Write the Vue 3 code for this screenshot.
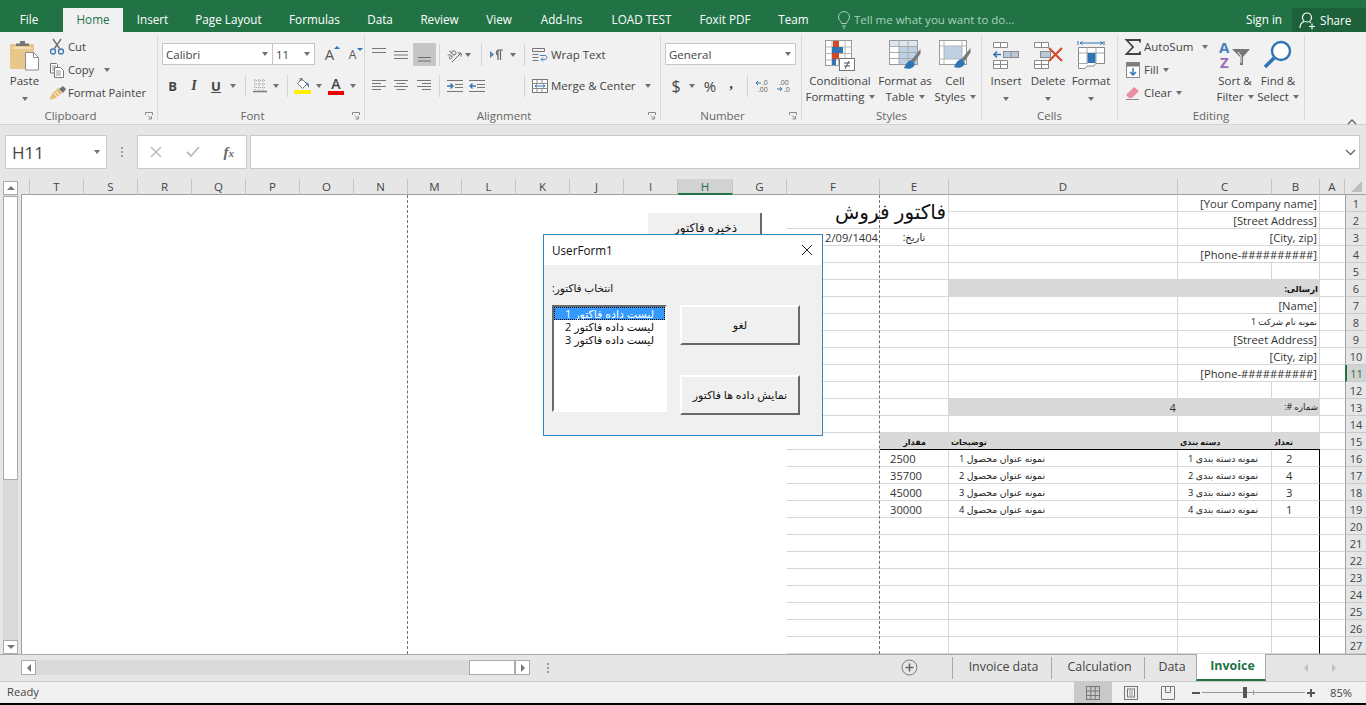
<script setup>
const tabs = [
  { t: 'File', w: 58 }, { t: 'Home', w: 60, on: true }, { t: 'Insert', w: 59 }, { t: 'Page Layout', w: 93 },
  { t: 'Formulas', w: 79 }, { t: 'Data', w: 52 }, { t: 'Review', w: 67 }, { t: 'View', w: 52 },
  { t: 'Add-Ins', w: 73 }, { t: 'LOAD TEST', w: 87 }, { t: 'Foxit PDF', w: 80 }, { t: 'Team', w: 57 }
]
const cols = ['', 'T', 'S', 'R', 'Q', 'P', 'O', 'N', 'M', 'L', 'K', 'J', 'I', 'H', 'G', 'F', 'E', 'D', 'C', 'B', 'A']
const mergedCB = [1, 2, 3, 4, 6, 7, 8, 9, 10, 11, 13]
const cbText = {
  1: '[Your Company name]', 2: '[Street Address]', 3: '[City, zip]', 4: '[Phone-##########]',
  6: 'ارسالی:', 7: '[Name]', 8: 'نمونه نام شرکت 1', 9: '[Street Address]', 10: '[City, zip]',
  11: '[Phone-##########]', 13: 'شماره #:'
}
const items = {
  16: ['2500', 'نمونه عنوان محصول 1', 'نمونه دسته بندی 1', '2'],
  17: ['35700', 'نمونه عنوان محصول 2', 'نمونه دسته بندی 2', '4'],
  18: ['45000', 'نمونه عنوان محصول 3', 'نمونه دسته بندی 3', '3'],
  19: ['30000', 'نمونه عنوان محصول 4', 'نمونه دسته بندی 4', '1']
}
function buildCells() {
  const out = []
  for (let r = 1; r <= 27; r++) {
    const bandRow = r === 6 || r === 13
    cols.forEach((col, i) => {
      const id = r + '-' + i
      if (i < 15) { out.push({ id, cls: i === 0 ? 'c first' : 'c' }); return }
      if (col === 'F') {
        if (r === 1) out.push({ id, cls: 'c ln title', text: 'فاکتور فروش', rtl: true })
        else if (r === 2) return
        else if (r === 3) out.push({ id, cls: 'c ln ar', text: '12/09/1404' })
        else out.push({ id, cls: 'c ln' })
        return
      }
      if (col === 'E') {
        if (r <= 2) return
        if (r === 3) out.push({ id, cls: 'c ln vr date-lbl ctr', text: 'تاریخ:', rtl: true })
        else if (r === 15) out.push({ id, cls: 'c band blk head ctr', text: 'مقدار', rtl: true })
        else if (items[r]) out.push({ id, cls: 'c ln vr ind', text: items[r][0] })
        else out.push({ id, cls: 'c ln vr' })
        return
      }
      if (col === 'D') {
        if (bandRow) out.push({ id, cls: 'c band ar', text: r === 13 ? '4' : '' })
        else if (r === 15) out.push({ id, cls: 'c band blk head', text: 'توضیحات', rtl: true })
        else if (items[r]) out.push({ id, cls: 'c ln vr tbl ind', text: items[r][1], rtl: true })
        else out.push({ id, cls: 'c ln vr' })
        return
      }
      if (col === 'C') {
        if (mergedCB.includes(r)) {
          const isAr = r === 6 || r === 8 || r === 13
          const base = bandRow ? 'c band span2 ar' : 'c ln vr span2 ar'
          const kind = r === 6 ? ' headr' : isAr ? ' small' : ''
          out.push({ id, cls: base + kind, text: cbText[r], rtl: isAr })
        } else if (r === 15) out.push({ id, cls: 'c band blk head', text: 'دسته بندی', rtl: true })
        else if (items[r]) out.push({ id, cls: 'c ln vr tbl ind', text: items[r][2], rtl: true })
        else out.push({ id, cls: 'c ln vr' })
        return
      }
      if (col === 'B') {
        if (mergedCB.includes(r)) return
        if (r === 15) out.push({ id, cls: 'c band blk head', text: 'تعداد', rtl: true })
        else if (r > 15) out.push({ id, cls: 'c ln vrb ind2', text: items[r] ? items[r][3] : '' })
        else out.push({ id, cls: 'c ln vr' })
        return
      }
      out.push({ id, cls: 'c ln' })
    })
    out.push({ id: 'h' + r, cls: r === 11 ? 'rh rh-on' : 'rh', text: String(r) })
  }
  return out
}
const cells = buildCells()
</script>

<template>
  <div class="app">
    <header class="titlebar">
      <div v-for="t in tabs" :key="t.t" class="tab" :class="{ on: t.on, file: t.t === 'File' }" :style="{ width: t.w + 'px' }">{{ t.t }}</div>
      <div class="tell">
        <svg width="14" height="18" viewBox="0 0 14 18"><path d="M4.500 12.500C4 10 1.500 9 1.500 6a5.500 5.500 0 0 1 11 0c0 3-2.500 4-3 6.500zM5 15h4M6 17h2" fill="none" stroke="#a9d2b9" stroke-width="1"/></svg>
        <span>Tell me what you want to do...</span>
      </div>
      <div class="signin">Sign in</div>
      <div class="share">
        <svg width="17" height="17" viewBox="0 0 17 17"><circle cx="8" cy="5.500" r="4.500" fill="none" stroke="#fff" stroke-width="1.200"/><path d="M1 16c0-3 1.500-5.500 4-6.500M10.500 10l1.500 .7" fill="none" stroke="#fff" stroke-width="1.200"/><path d="M10 14.500h6M13 11.500v6" stroke="#fff" stroke-width="1.200"/></svg>
        <span>Share</span>
      </div>
    </header>

    <section class="ribbon">
      <!-- Clipboard -->
      <div class="group g-clip">
        <div class="body">
          <div class="big paste">
            <div class="bigicon">
              <svg width="30" height="31" viewBox="0 0 30 31">
                <rect x="0" y="4" width="24" height="25" rx="1" fill="#e8c78b"/>
                <rect x="3" y="7" width="18" height="2" fill="#f3e0bb"/>
                <path d="M6 6V3.500h4V1h5v2.500h4V6z" fill="#757575"/>
                <path d="M15.500 12.500h8l5 5v12.500h-13z" fill="#fff" stroke="#8c8c8c"/>
                <path d="M23.500 12.500v5h5" fill="none" stroke="#8c8c8c"/>
              </svg>
            </div>
            <div class="bl">Paste</div>
            <i class="caret mt" />
          </div>
          <div class="smcol">
            <div class="sm">
              <svg class="i16" viewBox="0 0 16 16"><path d="M4 0l6.500 9.500M12 0L5.500 9.500" stroke="#6f6f6f" stroke-width="1.400" fill="none"/><circle cx="4" cy="12.500" r="2.500" fill="none" stroke="#3a78b5" stroke-width="1.300"/><circle cx="12" cy="12.500" r="2.500" fill="none" stroke="#3a78b5" stroke-width="1.300"/></svg>
              <span>Cut</span>
            </div>
            <div class="sm">
              <svg class="i16" viewBox="0 0 16 16"><path d="M1.500 1.500h6l1 1V11h-7z" fill="#fff" stroke="#777"/><path d="M3 4h4M3 6h2M3 8h2" stroke="#999"/><path d="M5.500 5.500h6l3 3v7h-9z" fill="#fff" stroke="#777"/><path d="M7 9h5M7 11h5M7 13h5" stroke="#999"/></svg>
              <span>Copy</span><i class="caret ml10" />
            </div>
            <div class="sm">
              <svg class="i16 wide tight" viewBox="0 0 18 16"><path d="M9 3l4 5-6 5c-2 1-5 1-6 2 0-2 1-4 2-6z" fill="#e5bd78"/><path d="M7 6l3 4M5 8l3 4" stroke="#fff" stroke-width=".8"/><path d="M10 4l4-3 3 3-3 4z" fill="#707070"/></svg>
              <span>Format Painter</span>
            </div>
          </div>
        </div>
        <div class="glabel"><span>Clipboard</span><svg class="launch" viewBox="0 0 8 8"><path d="M.5 3V.5H7.500V3M3 3.500l3 3M6.500 4v3H3.500" fill="none" stroke="#8a8a8a"/></svg></div>
      </div>

      <!-- Font -->
      <div class="group g-font">
        <div class="body col">
          <div class="combos">
            <div class="combo font-name"><span>Calibri</span><i class="caret" /></div>
            <div class="combo font-size"><span>11</span><i class="caret" /></div>
            <div class="aa big-a">A<i class="tri up" /></div>
            <div class="aa small-a">A<i class="tri down" /></div>
          </div>
          <div class="font-row">
            <b class="glyph">B</b>
            <i class="glyph ital">I</i>
            <u class="glyph und">U</u>
            <i class="caret" />
            <i class="sep" />
            <svg class="i16" viewBox="0 0 16 16"><path d="M2 2.500h12M2 6h12M2 9.500h12M3 1v11M7 1v11M11 1v11" stroke="#aaa" stroke-dasharray="1 1" fill="none"/><path d="M1 13.500h14" stroke="#777" stroke-width="1.500"/></svg>
            <i class="caret" />
            <i class="sep" />
            <svg width="18" height="18" viewBox="0 0 18 18"><path d="M8 2l5 5-4.500 4.500L3.500 6.500z" fill="#fff" stroke="#777"/><path d="M6 4V1.500h2V4" fill="none" stroke="#777"/><path d="M12 5l3 2v4l-2-3z" fill="#4d82b8"/><rect x="0" y="13" width="17" height="4" fill="#fff200"/></svg>
            <i class="caret" />
            <div class="colorA">A<i class="redbar" /></div>
            <i class="caret" />
          </div>
        </div>
        <div class="glabel"><span>Font</span><svg class="launch" viewBox="0 0 8 8"><path d="M.5 3V.5H7.500V3M3 3.500l3 3M6.500 4v3H3.500" fill="none" stroke="#8a8a8a"/></svg></div>
      </div>

      <!-- Alignment -->
      <div class="group g-align">
        <div class="body col">
          <div class="al-row1">
            <svg class="i16" viewBox="0 0 16 16"><path d="M1 1.500h14M1 5.500h14" stroke="#777"/></svg>
            <svg class="i16" viewBox="0 0 16 16"><path d="M1 4.500h14M1 8h14M1 11.500h14" stroke="#777"/></svg>
            <div class="active"><svg class="i16" viewBox="0 0 16 16"><path d="M2 10.500h13M2 14h13" stroke="#6a6a6a"/></svg></div>
            <i class="sep" />
            <svg class="i16" viewBox="0 0 16 16"><text x="1" y="10" font-size="9" fill="#666" font-family="Open Sans" transform="rotate(-45 6 8)">ab</text><path d="M6 15L15 6M11.500 6H15v3.500" fill="none" stroke="#666"/></svg>
            <i class="caret" />
            <i class="sep" />
            <svg width="14" height="11" viewBox="0 0 14 11"><path d="M0 2v7l4-3.500z" fill="#4d82b8"/><path d="M8 11V1h5M10.500 11V1M9 1C6 1 5.500 6 8 6" fill="none" stroke="#666" stroke-width="1.200"/></svg>
            <i class="caret" />
            <i class="sep" />
            <div class="sm nop">
              <svg class="i16" viewBox="0 0 16 16"><path d="M.5 1.500h12v3h-12zM.5 7.500h6M.5 10.500h6M.5 13.500h6" fill="none" stroke="#777"/><path d="M8 8.500h5c2.500 0 2.500 4 0 4H9.500" fill="none" stroke="#4d82b8"/><path d="M11 10.500l-2 2 2 2" fill="none" stroke="#4d82b8"/></svg>
              <span>Wrap Text</span>
            </div>
          </div>
          <div class="al-row2">
            <svg class="i16" viewBox="0 0 16 16"><path d="M1 2.500h14M1 5.500h9M1 8.500h14M1 11.500h9" stroke="#777"/></svg>
            <svg class="i16" viewBox="0 0 16 16"><path d="M1 2.500h14M3.500 5.500h9M1 8.500h14M3.500 11.500h9" stroke="#777"/></svg>
            <svg class="i16" viewBox="0 0 16 16"><path d="M1 2.500h14M6 5.500h9M1 8.500h14M6 11.500h9" stroke="#777"/></svg>
            <i class="sep" />
            <svg class="i16" viewBox="0 0 16 16"><path d="M0 2.500h16M8 6.500h8M8 9.500h8M0 13.500h16" stroke="#777"/><path d="M0 8h5M3.500 5.500L6 8l-2.500 2.500" fill="none" stroke="#2f75b5" stroke-width="1.300"/></svg>
            <svg class="i16" viewBox="0 0 16 16"><path d="M0 2.500h16M8 6.500h8M8 9.500h8M0 13.500h16" stroke="#777"/><path d="M7 8H1M3.500 5.500L1 8l2.500 2.500" fill="none" stroke="#2f75b5" stroke-width="1.300"/></svg>
            <span />
            <i class="sep" />
            <div class="sm nop">
              <svg class="i16" viewBox="0 0 16 16"><rect x=".5" y="1.500" width="15" height="13" fill="#fff" stroke="#777"/><path d="M.5 5.500h15M.5 10.500h15M5 5.500V1.500M10 5.500V1.500M5 10.500v4M10 10.500v4" stroke="#888"/><path d="M3 8h10M5 6.500L3 8l2 1.500M11 6.500L13 8l-2 1.500" fill="none" stroke="#2f75b5"/></svg>
              <span>Merge &amp; Center</span><i class="caret ml12" />
            </div>
          </div>
        </div>
        <div class="glabel"><span>Alignment</span><svg class="launch" viewBox="0 0 8 8"><path d="M.5 3V.5H7.500V3M3 3.500l3 3M6.500 4v3H3.500" fill="none" stroke="#8a8a8a"/></svg></div>
      </div>

      <!-- Number -->
      <div class="group g-num">
        <div class="body col">
          <div class="combo num-fmt"><span>General</span><i class="caret" /></div>
          <div class="num-row">
            <span class="nsym dollar">$</span>
            <i class="caret" />
            <span class="nsym">%</span>
            <b class="nsym comma">,</b>
            <i class="sep" />
            <svg class="i16" viewBox="0 0 16 16"><path d="M6 5H1M3 3L1 5l2 2" fill="none" stroke="#2f75b5"/><text x="7" y="7" font-size="7" fill="#666" font-family="Open Sans">.0</text><text x="3" y="14" font-size="7" fill="#666" font-family="Open Sans">.00</text></svg>
            <svg class="i16" viewBox="0 0 16 16"><text x="3" y="7" font-size="7" fill="#666" font-family="Open Sans">.00</text><path d="M1 11h5M4 9l2 2-2 2" fill="none" stroke="#2f75b5"/><text x="8" y="14" font-size="7" fill="#666" font-family="Open Sans">.0</text></svg>
          </div>
        </div>
        <div class="glabel"><span>Number</span><svg class="launch" viewBox="0 0 8 8"><path d="M.5 3V.5H7.500V3M3 3.500l3 3M6.500 4v3H3.500" fill="none" stroke="#8a8a8a"/></svg></div>
      </div>

      <!-- Styles -->
      <div class="group g-sty">
        <div class="body">
          <div class="big w64">
            <div class="bigicon">
              <svg width="30" height="31" viewBox="0 0 30 31">
                <rect x=".5" y=".5" width="26" height="25" fill="#fff" stroke="#9a9a9a"/>
                <path d="M.5 7h26M.5 13.500h26M.5 20h26M7 .5v25M13.500 .5v25M20 .5v25" stroke="#b5b5b5"/>
                <rect x="8" y="1" width="6" height="6" fill="#d24726"/><rect x="7" y="7" width="11" height="6" fill="#2f75b5"/><rect x="7" y="13" width="7" height="6" fill="#d24726"/><rect x="7" y="19" width="4" height="6" fill="#2f75b5"/>
                <rect x="14.500" y="18.500" width="15" height="12" fill="#fff" stroke="#777"/>
                <path d="M19 23h6M19 26h6M24 21l-4 8" stroke="#555"/>
              </svg>
            </div>
            <div class="bl">Conditional</div>
            <div class="bl">Formatting<i class="caret ml3" /></div>
          </div>
          <div class="big w66">
            <div class="bigicon">
              <svg width="32" height="31" viewBox="0 0 32 31">
                <rect x=".5" y=".5" width="28" height="24" fill="#fff" stroke="#9a9a9a"/>
                <rect x="1" y="1" width="27" height="5" fill="#dfe6ee"/><rect x="10" y="7" width="18" height="17" fill="#bdd0e4"/>
                <path d="M.5 6.500h28M.5 12.500h28M.5 18.500h28M10 .5v24M19 .5v24" stroke="#aaa"/>
                <path d="M31.500 9l-9 11 3 2.500 6-9z" fill="#777"/><path d="M23 20c-3 0-6 3-8 8 5 2 10 0 11-4z" fill="#2f75b5"/>
              </svg>
            </div>
            <div class="bl">Format as</div>
            <div class="bl">Table<i class="caret ml3" /></div>
          </div>
          <div class="big w34">
            <div class="bigicon">
              <svg width="32" height="31" viewBox="0 0 32 31">
                <rect x=".5" y=".5" width="27" height="24" fill="#fff" stroke="#9a9a9a"/>
                <rect x="5" y="6" width="18" height="13" fill="#bdd0e4"/><path d="M5 .5v24M23 .5v24M.5 6h27M.5 19h27" stroke="#b5b5b5"/>
                <path d="M31.500 8l-9 11 3 2.500 6-9z" fill="#777"/><path d="M23 19c-3 0-6 3-8 8 5 2 10 0 11-4z" fill="#2f75b5"/>
              </svg>
            </div>
            <div class="bl">Cell</div>
            <div class="bl">Styles<i class="caret ml3" /></div>
          </div>
        </div>
        <div class="glabel plain"><span>Styles</span></div>
      </div>

      <!-- Cells -->
      <div class="group g-cell">
        <div class="body">
          <div class="big w44">
            <div class="bigicon">
              <svg width="28" height="28" viewBox="0 0 28 28">
                <path d="M1.500 1.500h14v5h-14zM8.500 1.500v5M1.500 19.500h14v8h-14zM1.500 23.500h14M8.500 19.500v8" fill="#fff" stroke="#8a8a8a"/>
                <rect x="11.500" y="10.500" width="15" height="6" fill="#b8c9dc" stroke="#8a8a8a"/><path d="M19 10.500v6" stroke="#8a8a8a"/>
                <path d="M9 13.500H2M5 10.500l-3 3 3 3" fill="none" stroke="#2f75b5" stroke-width="1.600"/>
              </svg>
            </div>
            <div class="bl">Insert</div>
            <i class="caret mt" />
          </div>
          <div class="big w40">
            <div class="bigicon">
              <svg width="30" height="28" viewBox="0 0 30 28">
                <path d="M1.500 1.500h14v5h-14zM8.500 1.500v5M1.500 19.500h14v8h-14zM1.500 23.500h14M8.500 19.500v8" fill="#fff" stroke="#8a8a8a"/>
                <rect x="7.500" y="10.500" width="10" height="6" fill="#b8c9dc" stroke="#8a8a8a"/>
                <path d="M16 7l13 13M29 7L16 20" stroke="#d24726" stroke-width="2" fill="none"/>
              </svg>
            </div>
            <div class="bl">Delete</div>
            <i class="caret mt" />
          </div>
          <div class="big w46">
            <div class="bigicon">
              <svg width="29" height="30" viewBox="0 0 29 30">
                <path d="M1 1v4M27 1v4M3 3h23M3 3l2.500-1.500M3 3l2.500 1.500M26 3l-2.500-1.500M26 3l-2.500 1.500" fill="none" stroke="#2f75b5"/>
                <path d="M1.500 7.500h26v16h-9l-1.500 2.500h-7l-2 2.500H1.500z" fill="#fff" stroke="#8a8a8a"/>
                <path d="M1.500 13h26M1.500 23.500h9M10 7.500v16M19 7.500v16" stroke="#a8a8a8"/>
                <rect x="10.500" y="13" width="8" height="10" fill="#2f75b5"/>
              </svg>
            </div>
            <div class="bl">Format</div>
            <i class="caret mt" />
          </div>
        </div>
        <div class="glabel plain"><span>Cells</span></div>
      </div>

      <!-- Editing -->
      <div class="group g-edit">
        <div class="body">
          <div class="smcol edit">
            <div class="sm">
              <svg class="i16 sum" viewBox="0 0 16 16"><path d="M15 3.500V1H1.500l6.500 7-6.500 7H15v-2.500" fill="none" stroke="#444" stroke-width="1.800"/></svg>
              <span>AutoSum</span><i class="caret ml9" />
            </div>
            <div class="sm">
              <svg class="i16" viewBox="0 0 16 16"><rect x="1.500" y=".5" width="13" height="15" fill="#fff" stroke="#8a8a8a"/><rect x="1.500" y=".5" width="13" height="4" fill="#7c7c7c"/><path d="M8 6v7M5 10l3 3 3-3" fill="none" stroke="#2f75b5" stroke-width="1.500"/></svg>
              <span>Fill</span><i class="caret ml3" />
            </div>
            <div class="sm">
              <svg class="i16" viewBox="0 0 16 16"><path d="M1 10L9 2l5 4-7 7H4z" fill="#e98fa2"/><path d="M1 14.500h13" stroke="#888"/></svg>
              <span>Clear</span><i class="caret ml3" />
            </div>
          </div>
          <div class="big w42">
            <div class="bigicon">
              <svg width="32" height="29" viewBox="0 0 32 29">
                <text x="0" y="12" font-size="15" font-weight="700" fill="#4a7ebb" font-family="Open Sans">A</text>
                <text x="1" y="27" font-size="15" font-weight="700" fill="#9b6bb5" font-family="Open Sans">Z</text>
                <path d="M13 8h18l-7 8v8h-3v-8z" fill="#777"/><path d="M19 11l3 4v7" stroke="#fff" fill="none"/>
              </svg>
            </div>
            <div class="bl">Sort &amp;</div>
            <div class="bl">Filter<i class="caret ml3" /></div>
          </div>
          <div class="big w44">
            <div class="bigicon">
              <svg width="30" height="30" viewBox="0 0 30 30"><circle cx="18" cy="11" r="9" fill="#fff" stroke="#2f75b5" stroke-width="2.400"/><path d="M11 18L2 27" stroke="#2f75b5" stroke-width="3.600"/></svg>
            </div>
            <div class="bl">Find &amp;</div>
            <div class="bl">Select<i class="caret ml3" /></div>
          </div>
        </div>
        <div class="glabel plain"><span>Editing</span></div>
      </div>

      <div class="collapse">
        <svg width="10" height="6" viewBox="0 0 10 6"><path d="M1 5l4-4 4 4" fill="none" stroke="#666" stroke-width="1.400"/></svg>
      </div>
    </section>

    <section class="fbar">
      <div class="namebox"><span>H11</span><i class="caret" /></div>
      <div class="fdots"><i /><i /><i /></div>
      <div class="fbtns">
        <svg width="12" height="12" viewBox="0 0 12 12"><path d="M1 1l10 10M11 1L1 11" stroke="#bcbcbc" stroke-width="1.600"/></svg>
        <svg width="14" height="12" viewBox="0 0 14 12"><path d="M1 6l4 4 8-9" fill="none" stroke="#bcbcbc" stroke-width="1.800"/></svg>
        <span class="fx">f<small>x</small></span>
      </div>
      <div class="finput">
        <svg width="11" height="7" viewBox="0 0 11 7"><path d="M1 1l4.500 4.500L10 1" fill="none" stroke="#666" stroke-width="1.400"/></svg>
      </div>
    </section>

    <section class="sheet">
      <aside class="vscroll">
        <div class="sbtn"><i class="t-up" /></div>
        <div class="vtrack"><div class="vthumb" /></div>
        <div class="sbtn"><i class="t-dn" /></div>
      </aside>
      <div class="grid">
        <div v-for="(c, i) in cols" :key="'col' + i" class="ch" :class="{ 'ch-on': c === 'H', 'ch-f': i === 0 }">{{ c }}</div>
        <div class="corner"><i /></div>
        <div v-for="c in cells" :key="c.id" :class="c.cls" :dir="c.rtl ? 'rtl' : null">{{ c.text }}</div>
      </div>
      <i class="pb pb1" />
      <i class="pb pb2" />
      <div class="savebtn" dir="rtl">ذخیره فاکتور</div>
    </section>

    <section class="tabsbar">
      <div class="hs">
        <div class="sbtn h"><i class="t-lf" /></div>
        <div class="htrack" />
        <div class="hthumb" />
        <div class="sbtn h"><i class="t-rt" /></div>
      </div>
      <div class="hdots"><i /><i /><i /></div>
      <div class="addsheet">
        <svg width="17" height="17" viewBox="0 0 17 17"><circle cx="8.500" cy="8.500" r="7.500" fill="none" stroke="#777"/><path d="M8.500 4.500v8M4.500 8.500h8" stroke="#666" stroke-width="1.600"/></svg>
      </div>
      <div class="stabs">
        <div class="stab s1">Invoice data</div>
        <div class="stab s2">Calculation</div>
        <div class="stab s3">Data</div>
        <div class="stab active-sheet">Invoice</div>
      </div>
      <div class="tabnav"><i class="t-lf pale" /><i class="t-rt pale" /></div>
    </section>

    <footer class="status">
      <span class="ready">Ready</span>
      <div class="views">
        <div class="view on"><svg class="i16 wide" viewBox="0 0 18 16"><rect x="2.500" y="1.500" width="13" height="13" fill="none" stroke="#777"/><path d="M2.500 6h13M2.500 10.500h13M6.800 1.500v13M11.200 1.500v13" stroke="#777"/></svg></div>
        <div class="view"><svg class="i16 wide" viewBox="0 0 18 16"><rect x="2.500" y="1.500" width="13" height="13" fill="none" stroke="#777"/><rect x="5.500" y="4" width="7" height="8" fill="none" stroke="#777"/><path d="M7 6h4M7 8h4M7 10h4" stroke="#999"/></svg></div>
        <div class="view"><svg class="i16 wide" viewBox="0 0 18 16"><path d="M2.500 1.500h13v13h-13zM6.500 1.500v6h5v-6" fill="none" stroke="#777"/></svg></div>
      </div>
      <div class="zoomer">
        <i class="zminus" />
        <div class="ztrack"><i class="ztick" /><i class="zthumb" /></div>
        <i class="zplus" />
      </div>
      <span class="zpct">85%</span>
    </footer>
    <div class="blackbar" />

    <div class="form">
      <div class="form-title">
        <span>UserForm1</span>
        <svg width="12" height="12" viewBox="0 0 12 12"><path d="M1 1l10 10M11 1L1 11" stroke="#222" stroke-width="1"/></svg>
      </div>
      <div class="form-body">
        <div class="fl" dir="rtl">انتخاب فاکتور:</div>
        <div class="form-row">
          <div class="listbox" dir="rtl">
            <div class="li sel">لیست داده فاکتور 1</div>
            <div class="li">لیست داده فاکتور 2</div>
            <div class="li">لیست داده فاکتور 3</div>
          </div>
          <div class="form-btns">
            <div class="fbtn" dir="rtl">لغو</div>
            <div class="fbtn" dir="rtl">نمایش داده ها فاکتور</div>
          </div>
        </div>
      </div>
    </div>
  </div>
</template>

<style scoped>
.app {
  position: relative; width: 1366px; height: 705px; overflow: hidden; display: flex; flex-direction: column;
  font-family: "Open Sans", "DejaVu Sans", sans-serif; color: #444; background: #e6e6e6;
}
i { display: block; font-style: normal; }
svg { overflow: visible; }
.titlebar { height: 32px; background: #217346; display: flex; align-items: flex-end; color: #fff; font-size: 11.700px; flex: none; }
.tab { height: 24px; line-height: 23px; text-align: center; flex: none; }
.tab.file { margin-right: 5px; }
.tab.on { background: #f1f1f1; color: #217346; }
.tell { margin-left: 15px; width: 409px; height: 24px; display: flex; align-items: center; gap: 3px; color: #a9d2b9; flex: none; font-size: 11.500px; }
.tell span { margin-top: -2px; }
.signin { width: 46px; height: 24px; line-height: 23px; flex: none; }
.share { width: 74px; height: 24px; background: #1c613a; display: flex; align-items: center; gap: 4px; padding-left: 7px; box-sizing: border-box; flex: none; margin-left: auto; }

.ribbon { height: 93px; background: #f1f1f1; border-bottom: 1px solid #d2d2d2; box-sizing: border-box; display: flex; padding-top: 3px; font-size: 11.500px; flex: none; position: relative; }
.group { height: 85px; display: flex; flex-direction: column; border-right: 1px solid #d8d8d8; box-sizing: border-box; flex: none; }
.g-clip { width: 158px; } .g-font { width: 207px; padding-left: 4px; } .g-align { width: 296px; padding-left: 3px; }
.g-num { width: 141px; padding-left: 4px; } .g-sty { width: 180px; padding-left: 6px; } .g-cell { width: 136px; padding-left: 2px; } .g-edit { width: 187px; padding-left: 4px; }
.body { flex: 1; display: flex; min-height: 0; }
.body.col { flex-direction: column; padding-top: 8px; }
.glabel { height: 17px; margin-bottom: -4px; display: flex; align-items: center; color: #666; line-height: 16px; }
.glabel span { flex: 1; text-align: center; }
.glabel .launch { width: 8px; height: 8px; margin: 0 4px; flex: none; }
.g-font .glabel { margin-left: -5px; } .g-align .glabel { margin-left: -4px; } .g-num .glabel { margin-left: -5px; }
.g-sty .glabel { margin-left: -6px; } .g-cell .glabel { margin-left: -2px; } .g-edit .glabel { margin-left: -4px; }
.big { display: flex; flex-direction: column; align-items: center; flex: none; }
.bigicon { height: 38px; display: flex; align-items: center; justify-content: center; padding-top: 2px; box-sizing: border-box; }
.bl { height: 16px; line-height: 16px; white-space: nowrap; display: flex; align-items: center; }
.paste { width: 49px; }
.w64 { width: 64px; } .w66 { width: 66px; } .w34 { width: 34px; } .w44 { width: 44px; } .w40 { width: 40px; } .w46 { width: 46px; } .w42 { width: 42px; }
.smcol { display: flex; flex-direction: column; font-size: 11.200px; }
.smcol.edit { width: 92px; padding-left: 3px; box-sizing: border-box; font-size: 11.500px; }
.sm { height: 23px; display: flex; align-items: center; white-space: nowrap; }
.sm > svg { margin-right: 3px; flex: none; }
.sm > svg.tight { margin-right: 1px; }
.sm.nop { height: 22px; padding-left: 7px; justify-self: start; }
.i16 { width: 16px; height: 16px; display: block; }
.i16.wide { width: 18px; }
.caret { width: 0; height: 0; border-left: 3.500px solid transparent; border-right: 3.500px solid transparent; border-top: 4px solid #707070; flex: none; }
.caret.mt { margin-top: 8px; } .ml10 { margin-left: 10px; } .ml3 { margin-left: 4px; } .ml12 { margin-left: 9px; } .ml9 { margin-left: 9px; }

.combos { display: flex; height: 22px; align-items: center; }
.combo { height: 22px; background: #fff; border: 1px solid #c6c6c6; box-sizing: border-box; display: flex; align-items: center; justify-content: space-between; padding: 0 4px 0 3px; font-size: 11.500px; }
.font-name { width: 111px; }
.font-size { width: 43px; margin-left: -1px; }
.aa { position: relative; font-weight: 400; color: #555; text-align: center; }
.big-a { width: 21px; margin-left: 4px; font-size: 15px; }
.small-a { width: 21px; margin-left: 2px; font-size: 12px; }
.tri { position: absolute; width: 0; height: 0; border-left: 3px solid transparent; border-right: 3px solid transparent; right: 0; top: 2px; }
.tri.up { border-bottom: 3px solid #2f75b5; }
.tri.down { border-top: 3px solid #2f75b5; }
.font-row { margin-top: 9px; height: 23px; display: grid; grid-template-columns: 21px 22px 22px 12px 13px 15px 18px 4px 27px 6px 28px 6px; place-items: center; }
.glyph { font-size: 13px; font-family: "Open Sans", sans-serif; }
.ital { font-family: "Liberation Serif", serif; font-style: italic; font-weight: 700; font-size: 14px; }
.und { font-weight: 700; }
.sep { width: 1px; height: 22px; background: #d4d4d4; }
.colorA { position: relative; width: 18px; height: 18px; text-align: center; font-size: 14px; font-weight: 600; line-height: 14px; }
.redbar { position: absolute; left: 1px; right: 1px; bottom: 0; height: 4px; background: #e00; }
.al-row1, .al-row2 { display: grid; place-items: center; height: 23px; }
.al-row1 { grid-template-columns: 22px 22px 24px 6px 24px 4px 22px 10px 21px 2px auto; }
.al-row2 { margin-top: 8px; grid-template-columns: 22px 22px 24px 6px 26px 18px 37px 2px auto; }
.active { width: 23px; height: 23px; background: #c6c6c6; display: flex; align-items: center; justify-content: center; }
.num-fmt { width: 131px; }
.num-row { margin-top: 9px; height: 23px; display: grid; grid-template-columns: 22px 10px 26px 16px 16px 16px 26px; place-items: center; }
.nsym { font-size: 15px; line-height: 18px; }
.dollar { font-size: 16px; }
.comma { font-family: "Liberation Serif", serif; margin-top: -6px; }
.collapse { margin-left: 42px; margin-top: 78px; }

.fbar { height: 54px; background: #e6e6e6; display: flex; padding-top: 10px; box-sizing: border-box; flex: none; }
.namebox { margin-left: 5px; width: 102px; height: 34px; box-sizing: border-box; background: #fff; border: 1px solid #c9c9c9; display: flex; align-items: center; justify-content: space-between; padding: 0 6px; font-size: 17px; color: #444; }
.fdots { width: 30px; display: flex; flex-direction: column; justify-content: center; align-items: center; gap: 2px; height: 34px; }
.fdots i, .hdots i { width: 2px; height: 2px; background: #9c9c9c; }
.fbtns { width: 110px; height: 34px; box-sizing: border-box; background: #fff; border: 1px solid #c9c9c9; display: flex; align-items: center; justify-content: space-between; padding: 0 12px 0 12px; }
.fx { font-family: "Liberation Serif", serif; font-style: italic; font-weight: 700; font-size: 15px; color: #666; }
.fx small { font-size: 11px; }
.finput { margin-left: 3px; width: 1110px; height: 34px; box-sizing: border-box; background: #fff; border: 1px solid #c9c9c9; display: flex; align-items: center; justify-content: flex-end; padding-right: 3px; }

.sheet { position: relative; height: 475px; display: flex; flex: none; background: #e6e6e6; }
.vscroll { width: 21px; flex: none; padding: 2px 0 0 3px; box-sizing: border-box; display: flex; flex-direction: column; }
.sbtn { width: 15px; height: 14px; background: #fff; border: 1px solid #ababab; box-sizing: border-box; display: flex; align-items: center; justify-content: center; flex: none; }
.sbtn.h { height: 15px; }
.t-up, .t-dn, .t-lf, .t-rt { width: 0; height: 0; }
.t-up { border-left: 4px solid transparent; border-right: 4px solid transparent; border-bottom: 4px solid #777; }
.t-dn { border-left: 4px solid transparent; border-right: 4px solid transparent; border-top: 4px solid #777; }
.t-lf { border-top: 4px solid transparent; border-bottom: 4px solid transparent; border-right: 4px solid #777; }
.t-rt { border-top: 4px solid transparent; border-bottom: 4px solid transparent; border-left: 4px solid #777; }
.vtrack { width: 15px; flex: 1; background: #dadada; padding-top: 1px; box-sizing: border-box; }
.vthumb { height: 284px; background: #fff; border: 1px solid #ababab; box-sizing: border-box; }
.grid { display: grid; grid-template-columns: 9px repeat(12, 54px) 55px 54px 93px 69px 229px 94px 48px 25px 21px; grid-template-rows: 16px repeat(27, 17px); background: #fff; flex: none; font-size: 11.200px; color: #333; }
.ch { background: #e6e6e6; border-right: 1px solid #c4c4c4; border-bottom: 1px solid #9f9f9f; box-sizing: border-box; text-align: center; font-size: 11.500px; line-height: 15px; color: #444; overflow: hidden; }
.ch-on { background: #d2d2d2; border-bottom: 2px solid #217346; color: #217346; }
.corner { background: #e6e6e6; border-bottom: 1px solid #9f9f9f; box-sizing: border-box; position: relative; }
.corner i { position: absolute; right: 4px; bottom: 2px; width: 0; height: 0; border-left: 11px solid transparent; border-bottom: 11px solid #bdbdbd; }
.c { box-sizing: border-box; min-width: 0; white-space: nowrap; overflow: hidden; line-height: 17px; padding: 0 2px; }
.first { border-left: 1px solid #9f9f9f; }
.ln { border-bottom: 1px solid #d6d6d6; }
.vr { border-right: 1px solid #d6d6d6; }
.vrb { border-right: 1px solid #000; }
.band { background: #d9d9d9; }
.blk { border-bottom: 1px solid #000; }
.ar { text-align: right; }
.span2 { grid-column: span 2; }
.title { grid-column: span 2; grid-row: span 2; font-size: 20px; line-height: 33px; text-align: right; color: #111; border-right: 1px solid #d6d6d6; padding: 0 2px; overflow: visible; }
.small { font-size: 8.700px; color: #222; }
.tbl { font-size: 9.300px; color: #222; }
.date-lbl { font-size: 10px; color: #222; }
.head { font-size: 8px; font-weight: 700; text-align: left; color: #111; }
.headr { font-size: 8.500px; font-weight: 700; color: #111; }
.ctr { text-align: center; }
.ind { text-align: left; padding-left: 10px; }
.ind2 { text-align: left; padding-left: 14px; }
.rh { background: #e6e6e6; border-left: 1px solid #9f9f9f; border-bottom: 1px solid #c9c9c9; box-sizing: border-box; text-align: center; font-size: 11px; line-height: 17px; color: #444; }
.rh-on { background: #d2d2d2; border-left: 2px solid #217346; color: #217346; }
.pb { position: absolute; top: 16px; bottom: 0; width: 0; border-left: 1px dashed #707070; }
.pb1 { left: 407px; } .pb2 { left: 879px; }
.savebtn { position: absolute; left: 648px; top: 34px; width: 114px; height: 40px; box-sizing: border-box; padding-left: 3px; background: #f0f0f0; border-right: 2px solid #696969; text-align: center; line-height: 30px; font-size: 12px; color: #111; }

.tabsbar { height: 28px; background: #e6e6e6; border-top: 1px solid #a8a8a8; border-bottom: 1px solid #c9c9c9; box-sizing: border-box; display: flex; align-items: flex-start; flex: none; }
.hs { margin: 5px 0 0 21px; display: flex; height: 15px; flex: none; }
.htrack { width: 433px; background: #dadada; }
.hthumb { width: 46px; background: #fff; border: 1px solid #ababab; box-sizing: border-box; }
.hdots { width: 35px; margin-top: 8px; display: flex; flex-direction: column; align-items: center; gap: 2px; flex: none; }
.addsheet { margin: 4px 0 0 336px; width: 17px; flex: none; }
.stabs { margin-left: 34px; display: flex; height: 26px; flex: none; font-size: 12.400px; }
.stab { box-sizing: border-box; line-height: 24px; text-align: center; color: #444; position: relative; flex: none; }
.s1, .s2, .s3 { border-left: 1px solid #a8a8a8; margin-top: 2px; height: 22px; line-height: 20px; padding-left: 3px; }
.s1 { width: 99px; } .s2 { width: 93px; } .s3 { width: 52px; }
.active-sheet { width: 70px; height: 27px; margin-top: -1px; padding-left: 3px; background: #fff; border: 1px solid #a8a8a8; border-top: 0; border-bottom: 2px solid #217346; color: #217346; font-weight: 700; line-height: 24px; }
.tabnav { margin: 9px 0 0 38px; display: flex; gap: 24px; flex: none; }
.pale { opacity: .35; }

.status { height: 21px; background: #f1f1f1; display: flex; align-items: center; font-size: 11.200px; flex: none; }
.ready { margin-left: 7px; width: 1067px; color: #444; flex: none; margin-top: -2px; }
.views { display: flex; height: 21px; flex: none; }
.view { width: 37px; display: flex; align-items: center; justify-content: center; }
.view.on { background: #c9c9c9; width: 38px; }
.zoomer { display: flex; align-items: center; margin-left: 6px; flex: none; }
.zminus { width: 8px; height: 2px; background: #555; }
.ztrack { position: relative; width: 103px; height: 1px; background: #999; margin: 0 2px; }
.ztick { position: absolute; left: 51px; top: -2px; width: 1px; height: 5px; background: #999; }
.zthumb { position: absolute; left: 41px; top: -5px; width: 4px; height: 11px; background: #555; }
.zplus { width: 8px; height: 8px; background: linear-gradient(#555, #555) center/8px 2px no-repeat, linear-gradient(#555, #555) center/2px 8px no-repeat; }
.zpct { margin-left: 15px; flex: none; }
.blackbar { height: 2px; background: #000; flex: none; }

.form { position: absolute; left: 543px; top: 234px; width: 280px; height: 202px; box-sizing: border-box; border: 1px solid #2f86c5; background: #f0f0f0; display: flex; flex-direction: column; }
.form-title { height: 30px; background: #fff; display: flex; align-items: center; justify-content: space-between; padding: 0 9px 0 8px; font-size: 11.700px; color: #111; flex: none; }
.form-body { padding: 0 0 0 8px; flex: 1; font-size: 10.500px; color: #111; }
.fl { margin-top: 16px; width: 62px; height: 14px; line-height: 14px; white-space: nowrap; text-align: left; }
.form-row { margin-top: 10px; display: flex; }
.listbox { width: 115px; height: 107px; box-sizing: border-box; background: #fff; border: 2px solid; border-color: #696969 #fff #fff #696969; }
.li { height: 13px; line-height: 13px; padding-right: 11px; font-size: 11px; white-space: nowrap; text-align: right; }
.li.sel { background: #3399ff; color: #fff; outline: 1px dotted #000; outline-offset: -1px; }
.form-btns { margin-left: 13px; display: flex; flex-direction: column; gap: 30px; }
.fbtn { width: 120px; height: 40px; box-sizing: border-box; background: #f0f0f0; border: 2px solid; border-color: #fff #696969 #696969 #fff; text-align: center; line-height: 36px; font-size: 11px; }
</style>

<style>
html, body { margin: 0; background: #e6e6e6; overflow: hidden; }
</style>
